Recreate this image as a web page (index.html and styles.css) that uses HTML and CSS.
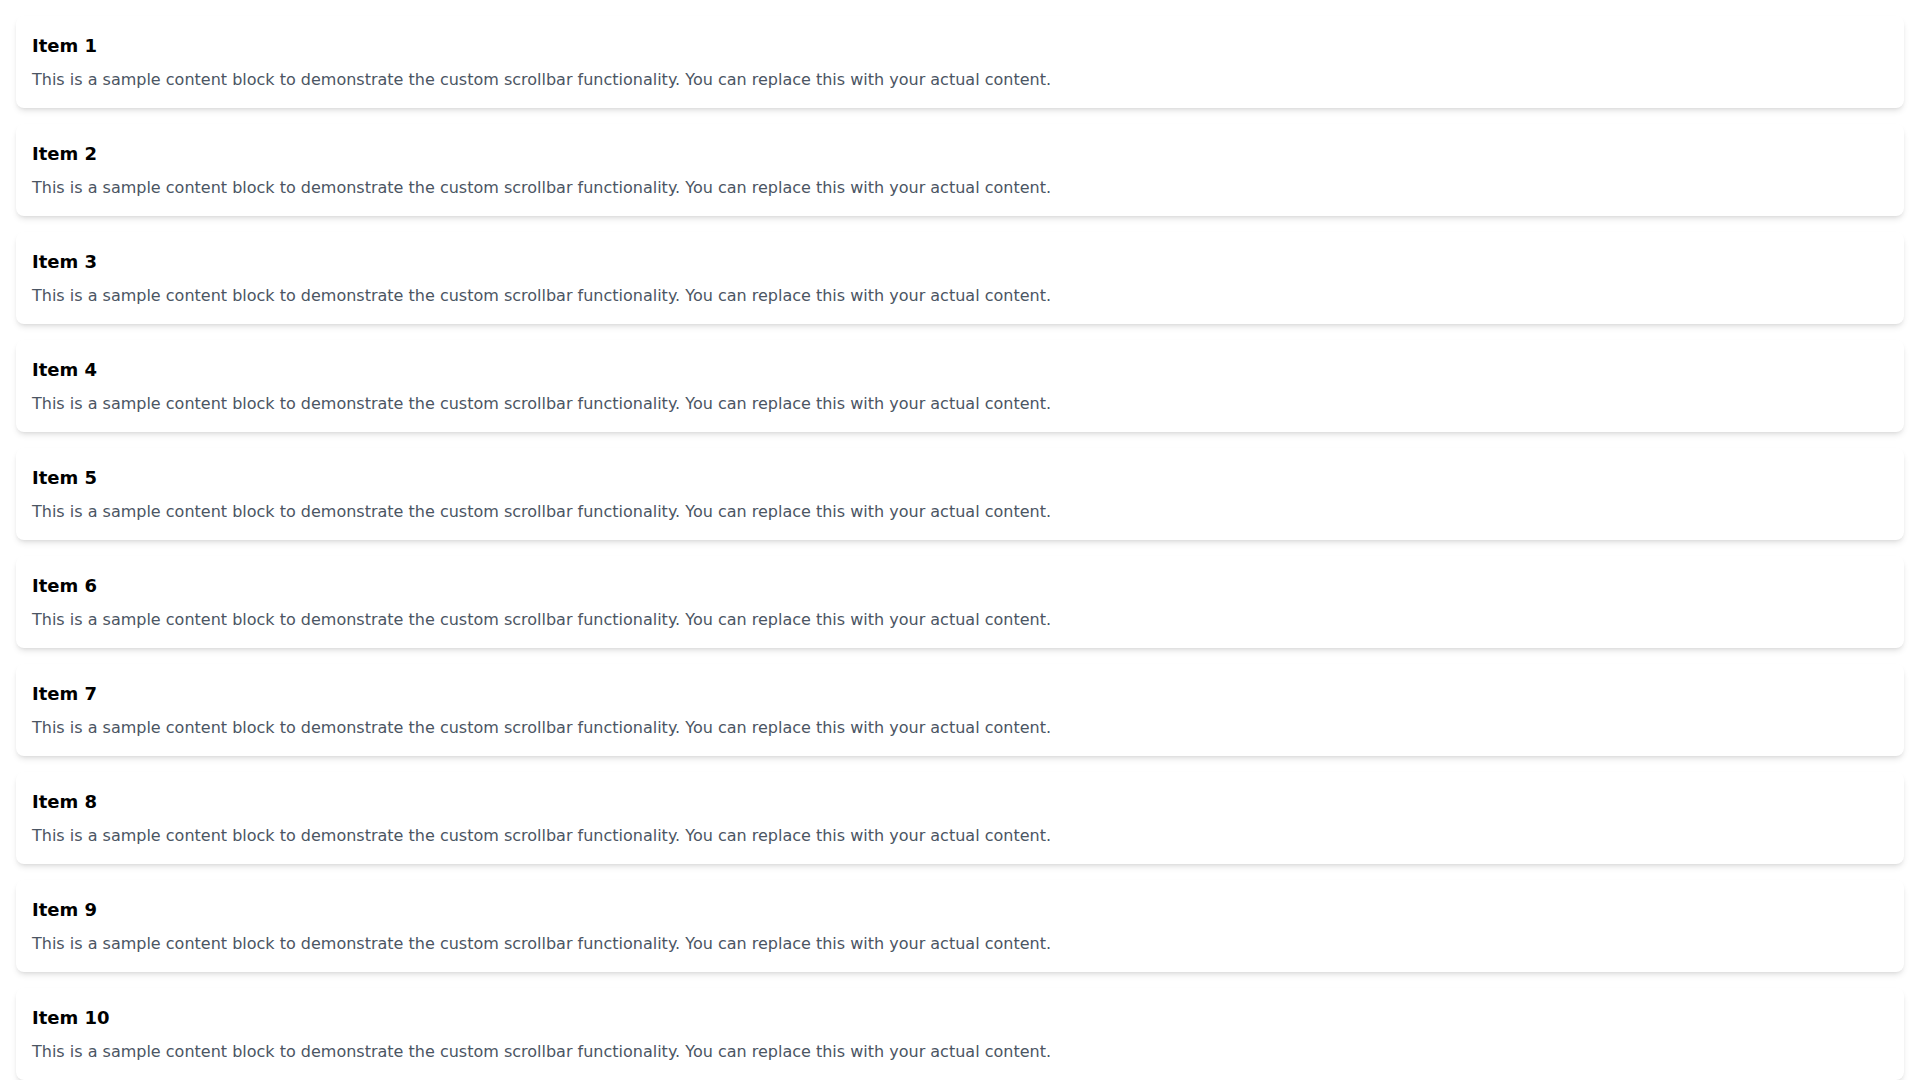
FILE: index.html
```html
<!DOCTYPE html>
<html>
<head>
<meta charset="utf-8">
<link rel="stylesheet" href="styles.css">
</head>
<body>
<div class="list">
  <div class="card"><h2 class="title">Item 1</h2><p class="text">This is a sample content block to demonstrate the custom scrollbar functionality. You can replace this with your actual content.</p></div>
  <div class="card"><h2 class="title">Item 2</h2><p class="text">This is a sample content block to demonstrate the custom scrollbar functionality. You can replace this with your actual content.</p></div>
  <div class="card"><h2 class="title">Item 3</h2><p class="text">This is a sample content block to demonstrate the custom scrollbar functionality. You can replace this with your actual content.</p></div>
  <div class="card"><h2 class="title">Item 4</h2><p class="text">This is a sample content block to demonstrate the custom scrollbar functionality. You can replace this with your actual content.</p></div>
  <div class="card"><h2 class="title">Item 5</h2><p class="text">This is a sample content block to demonstrate the custom scrollbar functionality. You can replace this with your actual content.</p></div>
  <div class="card"><h2 class="title">Item 6</h2><p class="text">This is a sample content block to demonstrate the custom scrollbar functionality. You can replace this with your actual content.</p></div>
  <div class="card"><h2 class="title">Item 7</h2><p class="text">This is a sample content block to demonstrate the custom scrollbar functionality. You can replace this with your actual content.</p></div>
  <div class="card"><h2 class="title">Item 8</h2><p class="text">This is a sample content block to demonstrate the custom scrollbar functionality. You can replace this with your actual content.</p></div>
  <div class="card"><h2 class="title">Item 9</h2><p class="text">This is a sample content block to demonstrate the custom scrollbar functionality. You can replace this with your actual content.</p></div>
  <div class="card"><h2 class="title">Item 10</h2><p class="text">This is a sample content block to demonstrate the custom scrollbar functionality. You can replace this with your actual content.</p></div>
</div>
</body>
</html>
```
FILE: styles.css
```css
html, body {
  margin: 0;
  padding: 0;
  background: #ffffff;
  overflow: hidden;
}
body {
  font-family: "DejaVu Sans", sans-serif;
}
.list {
  display: flex;
  flex-direction: column;
  gap: 16px;
  padding: 16px;
}
.card {
  background: #ffffff;
  border-radius: 8px;
  padding: 16px;
  box-shadow: 0 4px 6px -1px rgba(0,0,0,0.1), 0 2px 4px -2px rgba(0,0,0,0.1);
}
.title {
  margin: 0 0 8px 0;
  font-size: 18px;
  line-height: 28px;
  font-weight: 700;
  color: #000000;
}
.text {
  margin: 0;
  font-size: 16px;
  line-height: 24px;
  color: #4b5563;
}
```
